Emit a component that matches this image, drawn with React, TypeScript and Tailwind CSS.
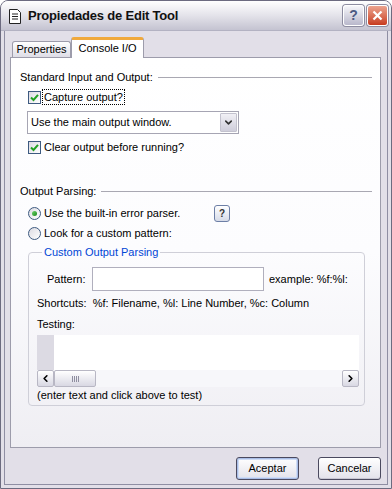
import { ChevronDown, ChevronLeft, ChevronRight } from "lucide-react";

function CheckBox({ label, focus }: { label: string; focus?: boolean }) {
  return (
    <div className="flex items-center h-[16px] ml-[8px]">
      <div className="w-[13px] h-[13px] border border-[#3d5a80] bg-gradient-to-br from-[#dcdbe2] to-white flex items-center justify-center">
        <svg width="9" height="9" viewBox="0 0 9 9">
          <path d="M1 4.5 L3.5 7 L8 1.8" stroke="#21a121" strokeWidth="2" fill="none" />
        </svg>
      </div>
      <span className={"ml-[2px] px-[1px] leading-[14px] " + (focus ? "outline outline-1 outline-dotted outline-black" : "")}>{label}</span>
    </div>
  );
}

function Radio({ checked }: { checked?: boolean }) {
  return (
    <div className="w-[13px] h-[13px] rounded-full border border-[#3d5a80] bg-gradient-to-br from-[#dcdbe2] to-white flex items-center justify-center shrink-0">
      {checked && <div className="w-[5px] h-[5px] rounded-full bg-gradient-to-br from-[#6bd36b] to-[#128a12]" />}
    </div>
  );
}

function GroupTitle({ text }: { text: string }) {
  return (
    <div className="flex items-center h-[14px]">
      <span className="leading-[14px]">{text}</span>
      <div className="flex-1 h-px bg-[#a9a8b2] ml-[5px]" />
    </div>
  );
}

function ScrollBtn({ children }: { children: React.ReactNode }) {
  return (
    <div className="w-[17px] h-[17px] rounded-[2px] border border-[#b8b7c4] bg-gradient-to-b from-white to-[#d9d8e3] flex items-center justify-center text-black">
      {children}
    </div>
  );
}

function DlgButton({ label, focused }: { label: string; focused?: boolean }) {
  return (
    <div
      className={
        "w-[63px] h-[23px] rounded-[3px] border border-[#4b4a5f] bg-gradient-to-b from-white to-[#e3e2ea] flex items-center justify-center leading-[13px] " +
        (focused ? "shadow-[inset_0_0_0_1px_#a9bde6,inset_0_0_0_2px_#cfdcf5]" : "shadow-[inset_0_-1px_0_#c8c7d2]")
      }
    >
      {label}
    </div>
  );
}

export default function App() {
  return (
    <div className="w-[392px] h-[489px] bg-[#e2dfe8] border border-[#6c6b80] rounded-t-[8px] flex flex-col overflow-hidden font-['Liberation_Sans',Arial,sans-serif] text-[11px] text-black">
      {/* title bar */}
      <div className="h-[30px] shrink-0 flex items-center pl-[8px] pr-[3px] bg-gradient-to-b from-white via-[#e4e3ea] to-[#c4c3d1] border-b border-[#b3b2c2]">
        <svg width="12" height="15" viewBox="0 0 12 15" className="mt-[1px]">
          <path d="M0.5 0.5 H8.5 L11.5 3.5 V14.5 H0.5 Z" fill="white" stroke="#222" />
          <path d="M3 5 H9 M3 7.5 H9 M3 10 H9" stroke="#222" />
        </svg>
        <span className="ml-[7px] font-bold text-[13px] tracking-[-0.2px] text-[#111] leading-[16px]">Propiedades de Edit Tool</span>
        <div className="flex-1" />
        <div className="w-[21px] h-[21px] rounded-[3px] border border-white shadow-[0_0_0_1px_#8d8ca0] bg-gradient-to-b from-[#f6f6fa] to-[#b9b8cb] flex items-center justify-center text-[14px] font-bold text-[#4c5a82]">
          ?
        </div>
        <div className="ml-[3px] w-[21px] h-[21px] rounded-[3px] border border-white shadow-[0_0_0_1px_#8d8ca0] bg-gradient-to-b from-[#eba38e] to-[#c73a1d] flex items-center justify-center">
          <svg width="11" height="11" viewBox="0 0 11 11">
            <path d="M1.5 1.5 L9.5 9.5 M9.5 1.5 L1.5 9.5" stroke="white" strokeWidth="2.2" />
          </svg>
        </div>
      </div>

      {/* body */}
      <div className="flex-1 mx-[3px] mb-[3px] border-x border-b border-[#8f8ea3] flex flex-col pl-[5px] pr-[6px] pt-[6px]">
        {/* tabs */}
        <div className="flex items-end h-[20px] pl-[2px]">
          <div className="w-[59px] h-[16px] rounded-t-[3px] border border-b-0 border-[#9d9cab] bg-gradient-to-b from-white to-[#dedde6] flex items-center justify-center leading-[13px]">
            Properties
          </div>
          <div className="relative top-px z-10 w-[73px] h-[21px] rounded-t-[3px] border-x border-[#9d9cab] border-t-[3px] border-t-[#f0a93c] bg-white flex items-start justify-center pt-[2px] leading-[13px]">
            Console I/O
          </div>
        </div>

        {/* panel */}
        <div className="h-[391px] border border-[#9d9cab] bg-gradient-to-b from-white via-[#fcfcfe] to-[#efeef3] pl-[9px] pr-[8px] pt-[12px]">
          <GroupTitle text="Standard Input and Output:" />
          <div className="mt-[5px]">
            <CheckBox label="Capture output?" focus />
          </div>
          <div className="mt-[6px] ml-[7px] w-[212px] h-[23px] border border-[#a6a5b3] bg-white flex items-center">
            <span className="flex-1 pl-[3px] leading-[13px]">Use the main output window.</span>
            <div className="w-[17px] h-[19px] mr-[1px] rounded-[1px] border border-[#c3c2ce] bg-gradient-to-b from-[#f1f0f5] to-[#cfcedb] flex items-center justify-center">
              <ChevronDown size={11} strokeWidth={3.5} className="text-[#333]" />
            </div>
          </div>
          <div className="mt-[5px]">
            <CheckBox label="Clear output before running?" />
          </div>

          <div className="mt-[29px]">
            <GroupTitle text="Output Parsing:" />
          </div>
          <div className="mt-[7px] ml-[8px] flex items-center h-[17px]">
            <Radio checked />
            <span className="ml-[3px] w-[170px] leading-[13px]">Use the built-in error parser.</span>
            <div className="w-[16px] h-[17px] rounded-[3px] border border-[#6d7fa6] bg-gradient-to-b from-white to-[#d6dbe8] flex items-center justify-center text-[10px] font-bold text-[#333]">
              ?
            </div>
          </div>
          <div className="mt-[3px] ml-[8px] flex items-center h-[16px]">
            <Radio />
            <span className="ml-[3px] leading-[13px]">Look for a custom pattern:</span>
          </div>

          <fieldset className="mt-[5px] ml-[8px] w-[337px] h-[160px] rounded-[4px] border border-[#cfcfd8] pl-[8px]">
            <legend className="ml-[5px] px-[2px] leading-[13px] text-[#0046d5]">Custom Output Parsing</legend>
            <div className="mt-[8px] flex items-center h-[24px] pl-[10px]">
              <span className="w-[45px] leading-[13px]">Pattern:</span>
              <div className="w-[172px] h-[24px] border border-[#b0afbd] bg-white" />
              <span className="ml-[5px] leading-[13px]">example: %f:%l:</span>
            </div>
            <div className="mt-[6px] leading-[13px]">Shortcuts:&nbsp; %f: Filename, %l: Line Number, %c: Column</div>
            <div className="mt-[8px] leading-[13px]">Testing:</div>
            <div className="mt-[4px] w-[322px] h-[52px] bg-white flex flex-col">
              <div className="flex-1 flex">
                <div className="w-[17px] bg-[#dcdae3]" />
              </div>
              <div className="h-[17px] flex bg-[#f7f7fa]">
                <ScrollBtn>
                  <ChevronLeft size={11} strokeWidth={3.5} />
                </ScrollBtn>
                <div className="w-[42px] h-[17px] rounded-[2px] border border-[#b8b7c4] bg-gradient-to-b from-white to-[#d9d8e3] flex items-center justify-center gap-px">
                  <div className="w-px h-[6px] bg-[#8f8ea0]" />
                  <div className="w-px h-[6px] bg-[#8f8ea0]" />
                  <div className="w-px h-[6px] bg-[#8f8ea0]" />
                  <div className="w-px h-[6px] bg-[#8f8ea0]" />
                </div>
                <div className="flex-1" />
                <ScrollBtn>
                  <ChevronRight size={11} strokeWidth={3.5} />
                </ScrollBtn>
              </div>
            </div>
            <div className="mt-[2px] leading-[13px]">(enter text and click above to test)</div>
          </fieldset>
        </div>

        {/* buttons */}
        <div className="mt-[9px] flex justify-end gap-[19px]">
          <DlgButton label="Aceptar" focused />
          <DlgButton label="Cancelar" />
        </div>
      </div>
    </div>
  );
}
